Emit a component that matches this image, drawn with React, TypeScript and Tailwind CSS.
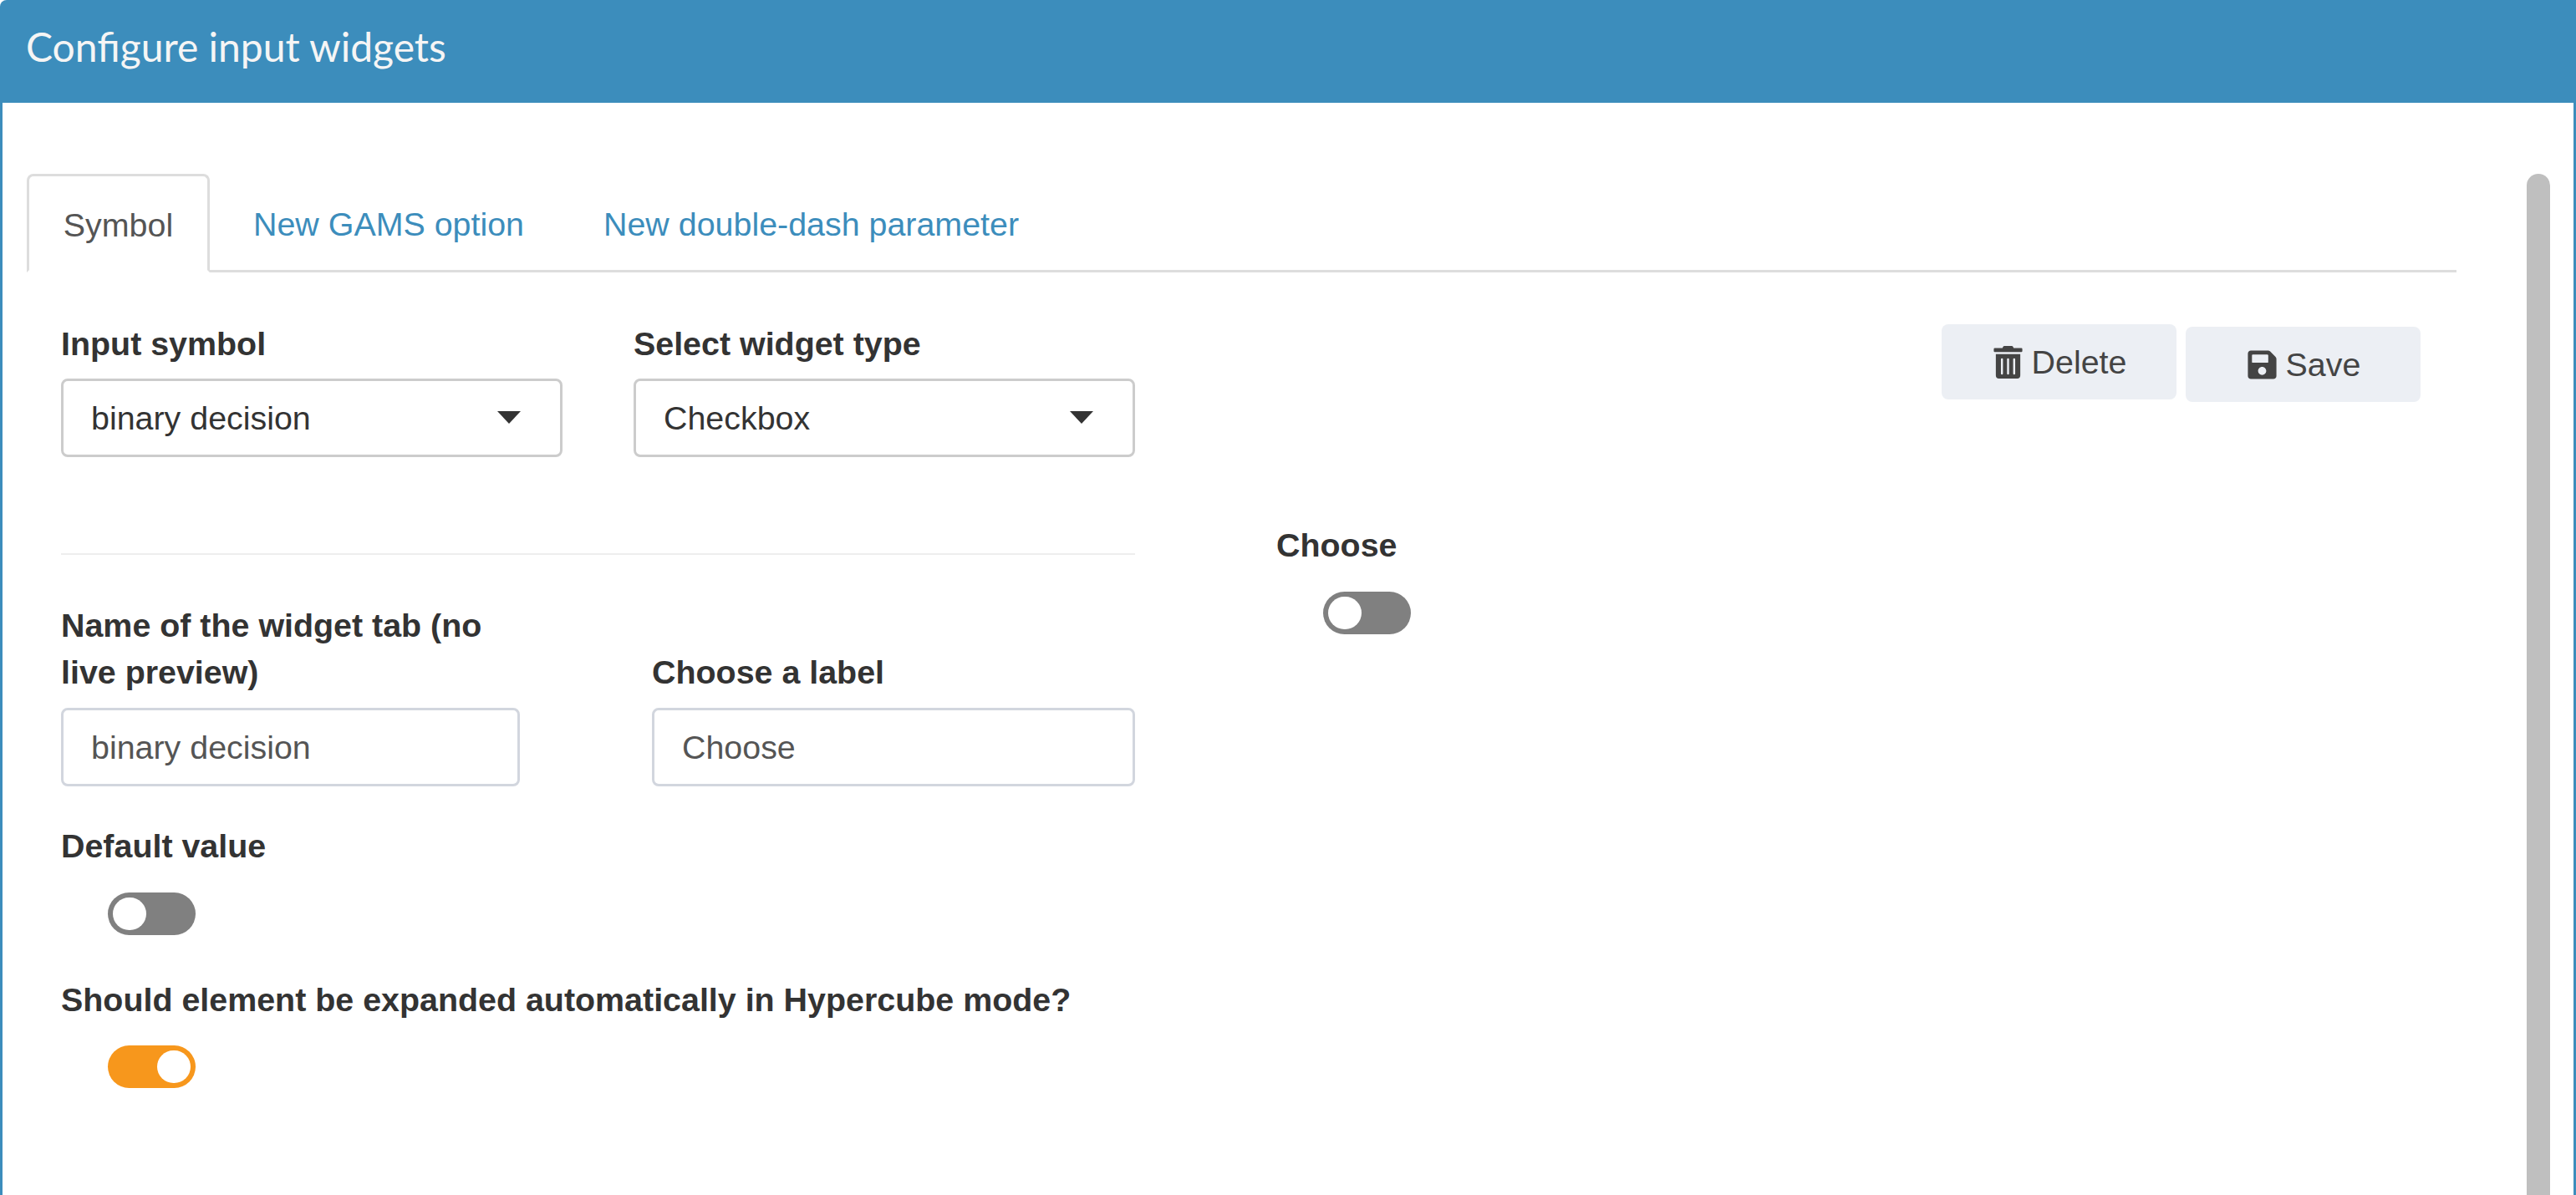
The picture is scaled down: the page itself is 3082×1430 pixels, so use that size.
import { FaSave, FaTrashAlt } from "react-icons/fa";

function Toggle({ on = false }: { on?: boolean }) {
  return (
    <div
      className={`ml-[56px] flex h-[51px] w-[105px] items-center rounded-full px-[6px] ${
        on ? "justify-end bg-[#f7971c]" : "justify-start bg-[#808080]"
      }`}
    >
      <div className="h-[39px] w-[40px] rounded-full bg-white"></div>
    </div>
  );
}

function Label({ children }: { children: React.ReactNode }) {
  return <div className="text-[39.4px] leading-[55.6px] font-bold text-[#333]">{children}</div>;
}

function SelectBox({ value }: { value: string }) {
  return (
    <div className="mt-[13.4px] flex h-[94px] items-center justify-between rounded-[8px] border-[3px] border-[#ccc] pt-[2px] pr-[47px] pl-[33px] text-[39.4px] text-[#333]">
      <span>{value}</span>
      <div className="h-0 w-0 -translate-y-[1px] border-x-[14px] border-t-[15px] border-x-transparent border-t-[#333]"></div>
    </div>
  );
}

function TextBox({ value }: { value: string }) {
  return (
    <div className="mt-[15px] flex h-[94px] items-center rounded-[8px] border-[3px] border-[#d2d6de] pl-[33px] text-[39.4px] text-[#555]">
      {value}
    </div>
  );
}

export default function App() {
  return (
    <div className="flex h-[1430px] w-full flex-col overflow-hidden bg-white font-['Liberation_Sans',Arial,sans-serif]">
      <div className="flex h-[123px] shrink-0 items-center rounded-tl-[8px] bg-[#3c8dbc] pb-[11px] pl-[31px] font-['Lato',sans-serif] text-[48px] text-[#f5f5f5]">
        Configure input widgets
      </div>

      <div className="flex min-h-0 flex-1 border-x-[3px] border-[#3c8dbc]">
        <div className="min-w-0 flex-1 pt-[85px] pl-[29px]">
          {/* tabs */}
          <div className="flex h-[118px] items-stretch border-b-[3px] border-[#ddd] text-[39.4px]">
            <div className="-mb-[3px] flex w-[219px] items-center justify-center rounded-t-[8px] border-[3px] border-[#ddd] border-b-white pt-[6px] text-[#555]">
              Symbol
            </div>
            <div className="ml-[52px] flex items-center pt-[6px] text-[#3c8dbc]">New GAMS option</div>
            <div className="ml-[95px] flex items-center pt-[6px] text-[#3c8dbc]">New double-dash parameter</div>
          </div>

          <div className="flex items-start">
            {/* left column */}
            <div className="ml-[41px] w-[1285px] shrink-0 pt-[58px]">
              <div className="flex gap-[85px]">
                <div className="w-[600px]">
                  <Label>Input symbol</Label>
                  <SelectBox value="binary decision" />
                </div>
                <div className="w-[600px]">
                  <Label>Select widget type</Label>
                  <SelectBox value="Checkbox" />
                </div>
              </div>

              <div className="mt-[115px] h-[2px] bg-[#eee]"></div>

              <div className="mt-[57px] flex items-end justify-between">
                <div className="w-[549px]">
                  <Label>Name of the widget tab (no live preview)</Label>
                  <TextBox value="binary decision" />
                </div>
                <div className="w-[578px]">
                  <Label>Choose a label</Label>
                  <TextBox value="Choose" />
                </div>
              </div>

              <div className="mt-[44px]">
                <Label>Default value</Label>
              </div>
              <div className="mt-[27px]">
                <Toggle />
              </div>

              <div className="mt-[50px]">
                <Label>Should element be expanded automatically in Hypercube mode?</Label>
              </div>
              <div className="mt-[26.6px]">
                <Toggle on />
              </div>
            </div>

            {/* preview */}
            <div className="ml-[169px] pt-[299px]">
              <Label>Choose</Label>
              <div className="mt-[27px]">
                <Toggle />
              </div>
            </div>

            {/* actions */}
            <div className="mr-[43px] ml-auto flex items-start gap-[11px] pt-[62px] text-[39.4px] text-[#444]">
              <button className="flex h-[90px] w-[281px] items-center justify-center gap-[9px] rounded-[8px] bg-[#eceff4]">
                <FaTrashAlt className="text-[39px]" />
                <span className="pt-[2px]">Delete</span>
              </button>
              <button className="mt-[3px] flex h-[90px] w-[281px] items-center justify-center gap-[9px] rounded-[8px] bg-[#eceff4]">
                <FaSave className="text-[39px]" />
                <span className="pt-[2px]">Save</span>
              </button>
            </div>
          </div>
        </div>

        {/* scrollbar */}
        <div className="mt-[85px] mr-[28px] ml-[84px] w-[28px] shrink-0 rounded-t-full bg-[#bfbfbf]"></div>
      </div>
    </div>
  );
}
